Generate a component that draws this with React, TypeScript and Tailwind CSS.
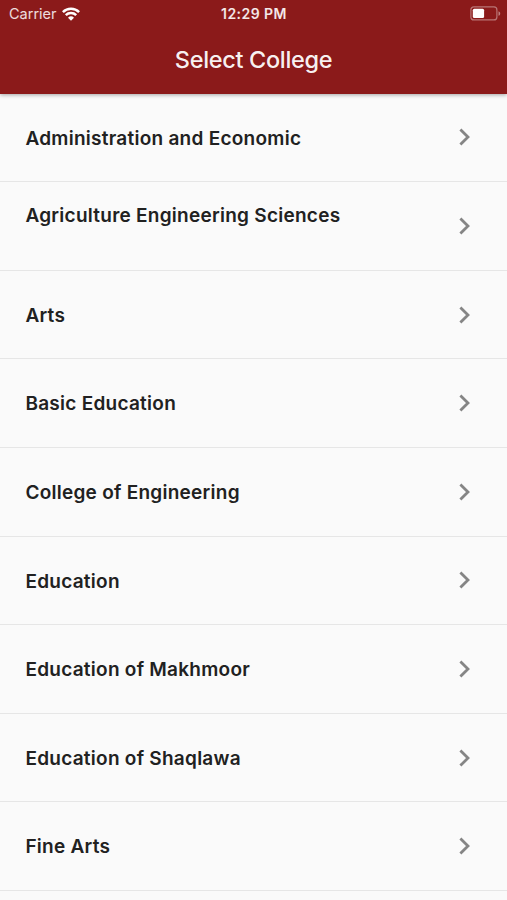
import clsx from "clsx";

type College = {
  name: string;
  tall?: boolean;
};

const colleges: College[] = [
  { name: "Administration and Economic" },
  { name: "Agriculture Engineering Sciences", tall: true },
  { name: "Arts" },
  { name: "Basic Education" },
  { name: "College of Engineering" },
  { name: "Education" },
  { name: "Education of Makhmoor" },
  { name: "Education of Shaqlawa" },
  { name: "Fine Arts" },
];

function WifiIcon() {
  return (
    <svg width="18" height="14" viewBox="0 0 18 14" fill="none" stroke="white" strokeWidth="2.5">
      <path d="M0.9 5.1a11.5 11.5 0 0 1 16.2 0" />
      <path d="M3.8 8.2a7.4 7.4 0 0 1 10.4 0" />
      <path d="M9 13.7 6 10.7a4.3 4.3 0 0 1 6 0z" fill="white" stroke="none" />
    </svg>
  );
}

function BatteryIcon() {
  return (
    <svg width="31" height="15" viewBox="0 0 31 15" fill="none">
      <rect x="0.9" y="0.9" width="26" height="13" rx="3" stroke="white" strokeOpacity="0.4" strokeWidth="1.2" />
      <rect x="2.8" y="2.7" width="11.3" height="9.4" rx="1.5" fill="white" />
      <path d="M28.5 5.2c2.3.9 2.3 3.7 0 4.6z" fill="white" fillOpacity="0.45" />
    </svg>
  );
}

function ChevronIcon() {
  return (
    <svg width="12" height="18" viewBox="0 0 12 18" fill="none" stroke="#858585" strokeWidth="2.8">
      <path d="M1.4 1.4 9 9l-7.6 7.6" />
    </svg>
  );
}

function StatusBar() {
  return (
    <div className="grid h-[27px] grid-cols-3 items-center pl-[9px] pr-[6px] text-white">
      <div className="flex items-center gap-[5px] text-[14.5px] text-white/85">
        <span>Carrier</span>
        <WifiIcon />
      </div>
      <span className="pr-[2px] pb-px text-center text-[14px] font-semibold tracking-[0.45px] text-white/90">
        12:29 PM
      </span>
      <div className="flex justify-end">
        <BatteryIcon />
      </div>
    </div>
  );
}

function CollegeRow({ name, tall }: College) {
  return (
    <li className="flex h-[88.6px] items-center justify-between border-b border-[#e6e6e6] pl-[25.4px] pr-[36.5px]">
      <span
        className={clsx(
          "whitespace-nowrap text-[19px] leading-6 font-semibold tracking-[0.26px] text-[#212121]",
          tall ? "pb-[20px]" : "pt-[2.6px]"
        )}
      >
        {name}
      </span>
      <ChevronIcon />
    </li>
  );
}

export default function App() {
  return (
    <div className="flex h-screen flex-col overflow-hidden bg-[#fafafa] font-['Inter',sans-serif]">
      <header className="relative h-[93.6px] shrink-0 bg-[#8b1a1a] shadow-[0_1px_4px_rgba(0,0,0,0.35)]">
        <StatusBar />
        <h1 className="flex h-[66px] items-center justify-center text-[23.5px] font-medium tracking-[-0.33px] text-white/95">
          Select College
        </h1>
      </header>
      <ul>
        {colleges.map((college) => (
          <CollegeRow key={college.name} {...college} />
        ))}
      </ul>
    </div>
  );
}
